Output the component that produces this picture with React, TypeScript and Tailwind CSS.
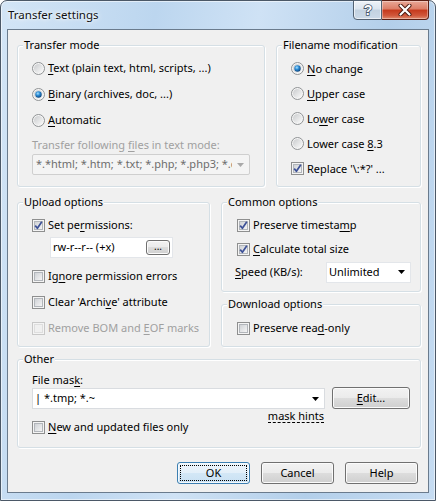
import React from "react";

function L({ t }: { t: string }) {
  const i = t.indexOf("&");
  if (i < 0) return <span>{t}</span>;
  return (
    <span className="whitespace-pre">
      {t.slice(0, i)}
      <span className="underline decoration-1 underline-offset-[2px]">{t[i + 1]}</span>
      {t.slice(i + 2)}
    </span>
  );
}

function Radio({ checked }: { checked?: boolean }) {
  return (
    <svg width="13" height="13" viewBox="0 0 13 13" className="shrink-0">
      <defs>
        <linearGradient id="rbowl" x1="0" y1="0" x2="1" y2="1">
          <stop offset="0" stopColor="#c9cbcd" />
          <stop offset="1" stopColor="#fbfbfb" />
        </linearGradient>
        <radialGradient id="rdot" cx="0.4" cy="0.35" r="0.7">
          <stop offset="0" stopColor="#a8e2ff" />
          <stop offset="0.45" stopColor="#2a8ad4" />
          <stop offset="1" stopColor="#0b3d73" />
        </radialGradient>
      </defs>
      <circle cx="6.5" cy="6.5" r="6" fill="#f6f6f6" stroke="#8f9294" />
      <circle cx="6.5" cy="6.5" r="4.6" fill="url(#rbowl)" />
      {checked && <circle cx="6.5" cy="6.5" r="3.2" fill="url(#rdot)" />}
    </svg>
  );
}

function Check({ checked, disabled }: { checked?: boolean; disabled?: boolean }) {
  return (
    <svg width="13" height="13" viewBox="0 0 13 13" className="shrink-0">
      <defs>
        <linearGradient id="cbox" x1="0" y1="0" x2="1" y2="1">
          <stop offset="0" stopColor="#cdd0d4" />
          <stop offset="1" stopColor="#f7f7f7" />
        </linearGradient>
      </defs>
      <rect x="0.5" y="0.5" width="12" height="12" fill="#f4f4f4" stroke={disabled ? "#c8c8c8" : "#8e8f8f"} />
      {!disabled && <rect x="2.5" y="2.5" width="8" height="8" fill="url(#cbox)" stroke="#b2b6bb" />}
      {disabled && <rect x="2.5" y="2.5" width="8" height="8" fill="#f0f0f0" stroke="#dedede" />}
      {checked && (
        <path d="M3.2 6.6 L5.4 9.3 L9.8 2.8" fill="none" stroke="#3d5197" strokeWidth="1.7" strokeLinejoin="round" />
      )}
    </svg>
  );
}

function Arrow({ gray }: { gray?: boolean }) {
  return (
    <svg width="7" height="4" viewBox="0 0 7 4" className="shrink-0">
      <polygon points="0,0 7,0 3.5,4" fill={gray ? "#a9a9a9" : "#000"} />
    </svg>
  );
}

function Group({ title, className, children }: { title: string; className: string; children?: React.ReactNode }) {
  return (
    <div
      className={
        "relative rounded-[3px] border border-[#d5dfe5] shadow-[inset_1px_1px_0_#fff,1px_1px_0_#fff] " + className
      }
    >
      <span className="absolute left-[5px] top-[-9px] bg-[#f0f0f0] px-[1px] leading-[16px] whitespace-nowrap">{title}</span>
      {children}
    </div>
  );
}

const btn =
  "flex items-center justify-center rounded-[3px] border border-[#707070] bg-[linear-gradient(#f2f2f2_0%,#ebebeb_49%,#dddddd_50%,#cfcfcf_100%)] shadow-[inset_0_0_0_1px_#fbfbfb]";

function RadioRow({ t, checked, h }: { t: string; checked?: boolean; h: string }) {
  return (
    <div className={"flex items-center gap-[3px] " + h}>
      <Radio checked={checked} />
      <span className="leading-[16px] whitespace-nowrap">
        <L t={t} />
      </span>
    </div>
  );
}

function CheckRow({ t, checked, disabled, h }: { t: string; checked?: boolean; disabled?: boolean; h: string }) {
  return (
    <div className={"flex items-center gap-[3px] " + h}>
      <Check checked={checked} disabled={disabled} />
      <span className={"leading-[16px] whitespace-nowrap " + (disabled ? "text-[#a0a0a0]" : "")}>
        <L t={t} />
      </span>
    </div>
  );
}

export default function App() {
  return (
    <div className="w-[436px] h-[501px] font-['Noto_Sans',sans-serif] text-[11px] text-black">
      <div className="flex h-[501px] w-[436px] flex-col rounded-t-[7px] border border-[#4b5867] bg-[linear-gradient(100deg,#d3e5f6_0%,#bcd6ef_30%,#cfe2f5_50%,#b3cfea_75%,#c6dcf2_100%)] shadow-[inset_0_0_0_1px_rgba(255,255,255,0.55)]">
        {/* title bar */}
        <div className="flex h-[28px] items-start justify-between">
          <div className="flex h-[28px] items-center pl-[7px] text-[11.5px] text-[#111] [text-shadow:0_0_6px_#fff,0_0_3px_#fff]">
            Transfer settings
          </div>
          <div className="-mt-px mr-[6px] flex h-[20px]">
            <div className="flex h-[20px] w-[29px] items-center justify-center rounded-bl-[4px] border border-[#536272] bg-[linear-gradient(#eef3f8_0%,#dbe5ef_45%,#c3d2e0_50%,#ccdae8_100%)] shadow-[inset_0_0_0_1px_rgba(255,255,255,0.6)]">
              <svg width="12" height="14" viewBox="0 0 12 14">
                <text x="6" y="12" textAnchor="middle" fontFamily="Liberation Sans, sans-serif" fontWeight="bold" fontSize="14" fill="#fff" stroke="#44556a" strokeWidth="1.6" paintOrder="stroke">?</text>
              </svg>
            </div>
            <div className="flex h-[20px] w-[47px] items-center justify-center rounded-br-[4px] border border-l-0 border-[#5b1f14] bg-[linear-gradient(#e9a897_0%,#dc7d66_45%,#c5391c_50%,#d0563a_80%,#e08b6e_100%)] shadow-[inset_0_0_0_1px_rgba(255,255,255,0.35)]">
              <svg width="14" height="12" viewBox="0 0 14 12">
                <path d="M2.5 1.5 L11.5 10.5 M11.5 1.5 L2.5 10.5" stroke="#4a1a10" strokeWidth="4" strokeLinecap="round" />
                <path d="M2.5 1.5 L11.5 10.5 M11.5 1.5 L2.5 10.5" stroke="#fff" strokeWidth="2.2" strokeLinecap="round" />
              </svg>
            </div>
          </div>
        </div>

        {/* client area */}
        <div className="mx-[6px] h-[464px] border border-[#6a7b8d] bg-[#f0f0f0] pl-[9px] pr-[7px] pt-[15px]">
          {/* row 1 */}
          <div className="flex gap-[11px]">
            <Group title="Transfer mode" className="h-[142px] w-[248px] pl-[14px] pt-[9px]">
              <RadioRow t="&Text (plain text, html, scripts, ...)" h="h-[26px]" />
              <RadioRow t="&Binary (archives, doc, ...)" checked h="h-[26px]" />
              <RadioRow t="&Automatic" h="h-[26px]" />
              <div className="mt-[3px] flex h-[18px] items-center whitespace-nowrap text-[#a0a0a0]">
                <L t="Transfer following &files in text mode:" />
              </div>
              <div className="flex h-[21px] w-[218px] items-center rounded-[2px] border border-[#cfcfcf] bg-[#f4f4f4]">
                <div className="flex-1 overflow-hidden whitespace-nowrap pl-[3px] text-[#6d6d6d]">
                  *.*html; *.htm; *.txt; *.php; *.php3; *.c
                </div>
                <div className="flex w-[17px] items-center justify-center">
                  <Arrow gray />
                </div>
              </div>
            </Group>
            <Group title="Filename modification" className="h-[142px] flex-1 pl-[14px] pt-[10px]">
              <RadioRow t="&No change" checked h="h-[25px]" />
              <RadioRow t="&Upper case" h="h-[25px]" />
              <RadioRow t="Lo&wer case" h="h-[25px]" />
              <RadioRow t="Lower case &8.3" h="h-[25px]" />
              <CheckRow t="Replace '\:*?' ..." checked h="h-[25px]" />
            </Group>
          </div>

          {/* row 2 */}
          <div className="mt-[15px] flex gap-[11px]">
            <Group title="Upload options" className="h-[145px] w-[193px] pl-[14px] pt-[10px]">
              <CheckRow t="Set pe&rmissions:" checked h="h-[24px]" />
              <div className="ml-[18px] flex h-[21px] w-[123px] items-center justify-between border border-[#e3e6ea] bg-white pl-[2px] pr-[2px]">
                <span className="whitespace-nowrap">rw-r--r-- (+x)</span>
                <div className={btn + " h-[15px] w-[24px] text-[10px] leading-none"}>
                  <span className="-mt-[3px]">...</span>
                </div>
              </div>
              <div className="mt-[5px]">
                <CheckRow t="Ig&nore permission errors" h="h-[26px]" />
                <CheckRow t="Clear 'Archi&ve' attribute" h="h-[26px]" />
                <CheckRow t="Remove BOM and &EOF marks" disabled h="h-[26px]" />
              </div>
            </Group>
            <div className="flex flex-1 flex-col">
              <Group title="Common options" className="h-[90px] pl-[15px] pt-[10px]">
                <CheckRow t="Preserve timesta&mp" checked h="h-[24px]" />
                <CheckRow t="&Calculate total size" checked h="h-[24px]" />
                <div className="-ml-[2px] flex h-[22px] items-center">
                  <span className="w-[91px] whitespace-nowrap">
                    <L t="&Speed (KB/s):" />
                  </span>
                  <div className="flex h-[21px] w-[85px] items-center border border-[#e3e6ea] bg-white">
                    <span className="flex-1 pl-[2px]">Unlimited</span>
                    <div className="flex w-[17px] items-center justify-center">
                      <Arrow />
                    </div>
                  </div>
                </div>
              </Group>
              <Group title="Download options" className="mt-[12px] h-[43px] pl-[15px] pt-[11px]">
                <CheckRow t="Preserve rea&d-only" h="h-[24px]" />
              </Group>
            </div>
          </div>

          {/* row 3 */}
          <Group title="Other" className="mt-[12px] h-[89px] pl-[14px] pt-[12px]">
            <div className="flex h-[16px] items-center">
              <L t="File mas&k:" />
            </div>
            <div className="-mt-px flex h-[22px] items-start gap-[7px]">
              <div className="mt-[1px] flex h-[21px] w-[293px] items-center border border-[#d9dce0] bg-white">
                <span className="flex-1 whitespace-nowrap pl-[2px]">| *.tmp; *.~</span>
                <div className="flex w-[17px] items-center justify-center">
                  <Arrow />
                </div>
              </div>
              <div className={btn + " h-[22px] w-[78px]"}>
                <L t="&Edit..." />
              </div>
            </div>
            <div className="flex h-[14px] w-[292px] items-center justify-end leading-[14px]">
              <span className="border-b border-dashed border-black leading-[12px]">mask hints</span>
            </div>
            <div className="-mt-[4px]">
              <CheckRow t="&New and updated files only" h="h-[16px]" />
            </div>
          </Group>

          {/* buttons */}
          <div className="mt-[14px] flex justify-end gap-[11px] pr-[3px]">
            <div className="flex h-[22px] w-[73px] items-center justify-center rounded-[3px] border border-[#3c7fb1] bg-[linear-gradient(#edf5fb_0%,#e3eff9_49%,#d3e7f6_50%,#c9e1f3_100%)] p-[2px] shadow-[inset_0_0_0_1px_#f4f9fd]">
              <div className="flex h-full w-full items-center justify-center border border-dotted border-black">OK</div>
            </div>
            <div className={btn + " h-[22px] w-[73px]"}>Cancel</div>
            <div className={btn + " h-[22px] w-[73px]"}>Help</div>
          </div>
        </div>
      </div>
    </div>
  );
}
